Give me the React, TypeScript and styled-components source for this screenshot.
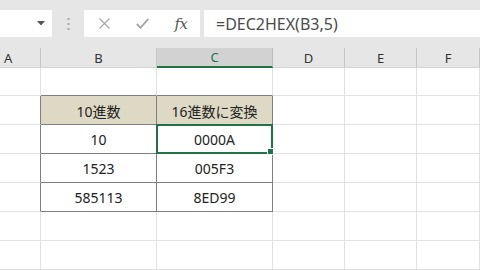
import React from "react";
import styled, { createGlobalStyle } from "styled-components";

const Global = createGlobalStyle`
  html, body { margin: 0; padding: 0; background: #fff; }
  body { width: 480px; height: 270px; overflow: hidden; font-family: "Noto Sans", "Noto Sans CJK JP", sans-serif; }
`;

const Page = styled.div`
  width: 480px;
  height: 270px;
  overflow: hidden;
  display: flex;
  flex-direction: column;
  background: #fff;
`;

const Toolbar = styled.div`
  height: 48px;
  flex: none;
  background: #e6e6e6;
  display: flex;
  align-items: flex-start;
  padding-top: 10px;
  box-sizing: border-box;
`;

const NameBox = styled.div`
  width: 52px;
  height: 27px;
  background: #fff;
  display: flex;
  align-items: center;
  justify-content: flex-end;
  padding-right: 7px;
  box-sizing: border-box;
`;

const Grip = styled.div`
  width: 32px;
  height: 27px;
  display: flex;
  align-items: center;
  justify-content: center;
`;

const FuncBox = styled.div`
  width: 116px;
  height: 27px;
  background: #fff;
  display: flex;
  align-items: center;
  box-sizing: border-box;
  padding-left: 13px;
`;

const FuncIcon = styled.div<{ $w: number }>`
  width: ${(p) => p.$w}px;
  height: 27px;
  display: flex;
  align-items: center;
  justify-content: center;
`;

const Fx = styled.span`
  font-family: "DejaVu Serif", "Liberation Serif", serif;
  font-style: italic;
  font-size: 15px;
  color: #555;
  letter-spacing: -0.5px;
`;

const FormulaBox = styled.div`
  margin-left: 4px;
  flex: 1;
  height: 27px;
  background: #fff;
  display: flex;
  align-items: center;
  padding-left: 12px;
  font-size: 16px;
  color: #4a4a4a;
  font-family: "Noto Sans", sans-serif;
`;

const Sheet = styled.div`
  display: grid;
  grid-template-columns: 41px 116px 116px 72px 72px 63px;
  grid-template-rows: 20px 28px 29px 29px 29px 29px 29px 29px;
`;

const ColHead = styled.div<{ $sel?: boolean; $align?: string }>`
  background: ${(p) => (p.$sel ? "#d2d2d2" : "#e6e6e6")};
  color: ${(p) => (p.$sel ? "#217346" : "#333")};
  border-right: 1px solid ${(p) => (p.$sel ? "#bdbdbd" : "#c8c8c8")};
  border-bottom: ${(p) => (p.$sel ? "2px solid #217346" : "1px solid #d4d4d4")};
  box-sizing: border-box;
  display: flex;
  align-items: center;
  justify-content: ${(p) => p.$align || "center"};
  padding-left: ${(p) => (p.$align ? "4px" : "0")};
  font-size: 13px;
  font-family: "Noto Sans", sans-serif;
`;

const Cell = styled.div<{ $r?: boolean; $b?: boolean; $head?: boolean }>`
  position: relative;
  box-sizing: border-box;
  border-right: 1px solid ${(p) => (p.$r ? "#7f7f7f" : "#e1e1e1")};
  border-bottom: 1px solid ${(p) => (p.$b ? "#7f7f7f" : "#e1e1e1")};
  background: ${(p) => (p.$head ? "#ddd9c4" : "#fff")};
  display: flex;
  align-items: center;
  justify-content: center;
  font-size: 14px;
  color: #222;
  font-family: "Noto Sans", "Noto Sans CJK JP", sans-serif;
  padding-top: 1px;
`;

const Selection = styled.div`
  position: absolute;
  left: -1px;
  top: -1px;
  right: -1px;
  bottom: -1px;
  border: 2px solid #217346;
  pointer-events: none;
`;

const Handle = styled.div`
  position: absolute;
  right: -3px;
  bottom: -3px;
  width: 5px;
  height: 5px;
  background: #217346;
  border: 1px solid #fff;
  z-index: 2;
`;

type CellSpec = { text?: string; r?: boolean; b?: boolean; head?: boolean; sel?: boolean };

const rows: CellSpec[][] = [
  [{}, { b: true }, { b: true }, {}, {}, {}],
  [{ r: true }, { text: "10進数", r: true, b: true, head: true }, { text: "16進数に変換", r: true, b: true, head: true }, {}, {}, {}],
  [{ r: true }, { text: "10", r: true, b: true }, { text: "0000A", r: true, b: true, sel: true }, {}, {}, {}],
  [{ r: true }, { text: "1523", r: true, b: true }, { text: "005F3", r: true, b: true }, {}, {}, {}],
  [{ r: true }, { text: "585113", r: true, b: true }, { text: "8ED99", r: true, b: true }, {}, {}, {}],
  [{}, {}, {}, {}, {}, {}],
  [{}, {}, {}, {}, {}, {}],
];

export default function App() {
  return (
    <Page>
      <Global />
      <Toolbar>
        <NameBox>
          <svg width="8" height="5" viewBox="0 0 8 5">
            <path d="M0 0 H8 L4 4.5 Z" fill="#555" />
          </svg>
        </NameBox>
        <Grip>
          <svg width="3" height="12" viewBox="0 0 3 12">
            <rect x="0.5" y="0" width="2" height="2" fill="#a8a8a8" />
            <rect x="0.5" y="5" width="2" height="2" fill="#a8a8a8" />
            <rect x="0.5" y="10" width="2" height="2" fill="#a8a8a8" />
          </svg>
        </Grip>
        <FuncBox>
          <FuncIcon $w={14}>
            <svg width="11" height="11" viewBox="0 0 11 11">
              <path d="M0.5 0.5 L10.5 10.5 M10.5 0.5 L0.5 10.5" stroke="#a6a6a6" strokeWidth="1.2" />
            </svg>
          </FuncIcon>
          <FuncIcon $w={24} />
          <FuncIcon $w={14}>
            <svg width="13" height="11" viewBox="0 0 13 11">
              <path d="M0.8 6 L4.5 9.8 L12.3 0.8" stroke="#a6a6a6" strokeWidth="1.8" fill="none" />
            </svg>
          </FuncIcon>
          <FuncIcon $w={24} />
          <FuncIcon $w={16}>
            <Fx>fx</Fx>
          </FuncIcon>
        </FuncBox>
        <FormulaBox>=DEC2HEX(B3,5)</FormulaBox>
      </Toolbar>
      <Sheet>
        <ColHead $align="flex-start">A</ColHead>
        <ColHead>B</ColHead>
        <ColHead $sel>C</ColHead>
        <ColHead>D</ColHead>
        <ColHead>E</ColHead>
        <ColHead>F</ColHead>
        {rows.map((row, ri) =>
          row.map((c, ci) => (
            <Cell key={`${ri}-${ci}`} $r={c.r} $b={c.b} $head={c.head}>
              {c.text}
              {c.sel && (
                <Selection>
                  <Handle />
                </Selection>
              )}
            </Cell>
          ))
        )}
      </Sheet>
    </Page>
  );
}
